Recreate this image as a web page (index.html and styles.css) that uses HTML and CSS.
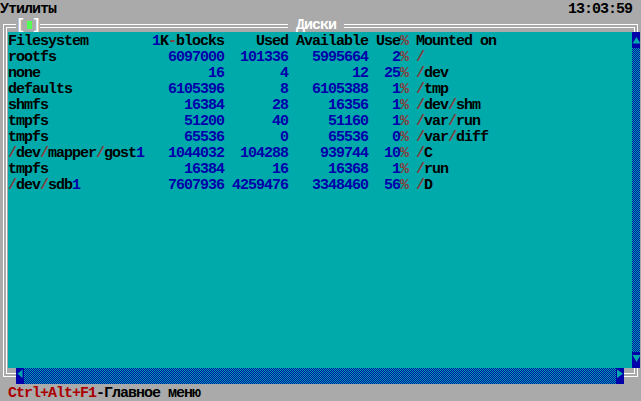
FILE: index.html
```html
<!DOCTYPE html>
<html lang="ru">
<head>
<meta charset="utf-8">
<title>Диски</title>
<link rel="stylesheet" href="styles.css">
</head>
<body>
<div class="topbar"><span>Утилиты</span><span>13:03:59</span></div>
<div class="window">
  <div class="titlebar">
    <span class="bracket">[</span><span class="close"></span><span class="bracket">]</span>
    <span class="title">Диски</span>
  </div>
  <div class="main">
    <div class="content">
      <div class="row"><span>Filesystem</span><span class="r"><span class="n">1</span>K<span class="p">-</span>blocks</span><span class="r">Used</span><span class="r">Available</span><span class="r">Use<span class="p">%</span></span><span>Mounted on</span></div>
      <div class="row"><span>rootfs</span><span class="r n">6097000</span><span class="r n">101336</span><span class="r n">5995664</span><span class="r"><span class="n">2</span><span class="p">%</span></span><span><span class="p">/</span></span></div>
      <div class="row"><span>none</span><span class="r n">16</span><span class="r n">4</span><span class="r n">12</span><span class="r"><span class="n">25</span><span class="p">%</span></span><span><span class="p">/</span>dev</span></div>
      <div class="row"><span>defaults</span><span class="r n">6105396</span><span class="r n">8</span><span class="r n">6105388</span><span class="r"><span class="n">1</span><span class="p">%</span></span><span><span class="p">/</span>tmp</span></div>
      <div class="row"><span>shmfs</span><span class="r n">16384</span><span class="r n">28</span><span class="r n">16356</span><span class="r"><span class="n">1</span><span class="p">%</span></span><span><span class="p">/</span>dev<span class="p">/</span>shm</span></div>
      <div class="row"><span>tmpfs</span><span class="r n">51200</span><span class="r n">40</span><span class="r n">51160</span><span class="r"><span class="n">1</span><span class="p">%</span></span><span><span class="p">/</span>var<span class="p">/</span>run</span></div>
      <div class="row"><span>tmpfs</span><span class="r n">65536</span><span class="r n">0</span><span class="r n">65536</span><span class="r"><span class="n">0</span><span class="p">%</span></span><span><span class="p">/</span>var<span class="p">/</span>diff</span></div>
      <div class="row"><span><span class="p">/</span>dev<span class="p">/</span>mapper<span class="p">/</span>gost<span class="n">1</span></span><span class="r n">1044032</span><span class="r n">104288</span><span class="r n">939744</span><span class="r"><span class="n">10</span><span class="p">%</span></span><span><span class="p">/</span>C</span></div>
      <div class="row"><span>tmpfs</span><span class="r n">16384</span><span class="r n">16</span><span class="r n">16368</span><span class="r"><span class="n">1</span><span class="p">%</span></span><span><span class="p">/</span>run</span></div>
      <div class="row"><span><span class="p">/</span>dev<span class="p">/</span>sdb<span class="n">1</span></span><span class="r n">7607936</span><span class="r n">4259476</span><span class="r n">3348460</span><span class="r"><span class="n">56</span><span class="p">%</span></span><span><span class="p">/</span>D</span></div>
    </div>
    <div class="vscroll">
      <div class="arrow"><svg width="8" height="16" viewBox="0 0 8 16"><polygon points="0.5,11.5 4.5,5 8.5,11.5" fill="#00aaaa"/></svg></div>
      <div class="track"></div>
      <div class="arrow"><svg width="8" height="16" viewBox="0 0 8 16"><polygon points="0.5,3 8.5,3 4.5,10" fill="#00aaaa"/></svg></div>
    </div>
  </div>
  <div class="hscroll">
    <div class="arrow"><svg width="8" height="16" viewBox="0 0 8 16"><polygon points="6.5,1.5 6.5,10 1.5,5.75" fill="#00aaaa"/></svg></div>
    <div class="track"></div>
    <div class="arrow"><svg width="8" height="16" viewBox="0 0 8 16"><polygon points="1,1.5 1,10 7,5.75" fill="#00aaaa"/></svg></div>
  </div>
</div>
<div class="footer"><span class="hot">Ctrl+Alt+F1</span>-Главное меню</div>
</body>
</html>
```
FILE: styles.css
```css
* { box-sizing: border-box; }
html, body { margin: 0; padding: 0; }
body {
  width: 641px;
  height: 401px;
  overflow: hidden;
  background: #aaaaaa;
  color: #000;
  font-family: "Liberation Mono", "DejaVu Sans Mono", monospace;
  font-weight: bold;
  font-size: 15px;
  letter-spacing: -1px;
  line-height: 20px;
}
.topbar {
  display: flex;
  justify-content: space-between;
  height: 16px;
  padding-right: 9px;
}
.window {
  width: 635px;
  height: 353px;
  margin: 8px 0 0 3px;
  border: 4px double #ffffff;
  display: flex;
  flex-direction: column;
}
.window > * { flex-shrink: 0; }
.titlebar {
  display: flex;
  height: 16px;
  margin: -12px 0 0 9px;
}
.bracket {
  width: 8px;
  height: 16px;
  background: #aaaaaa;
  color: #ffffff;
}
.close {
  width: 8px;
  height: 16px;
  background: linear-gradient(#55ff55, #55ff55) 3px 5px / 5px 8px no-repeat, #aaaaaa;
}
.title {
  height: 16px;
  margin-left: 248px;
  padding: 0 8px;
  background: #aaaaaa;
  color: #ffffff;
}
.main {
  display: flex;
  width: 632px;
  height: 336px;
  margin-left: 1px;
}
.content {
  flex: 1;
  background: #00aaaa;
}
.row {
  display: grid;
  grid-template-columns: 136px 72px 56px 72px 32px auto;
  column-gap: 8px;
  height: 16px;
  white-space: pre;
}
.r { text-align: right; }
.n { color: #0000aa; }
.p { color: #8c3838; }
.vscroll {
  width: 8px;
  display: flex;
  flex-direction: column;
}
.arrow {
  width: 8px;
  height: 16px;
  flex-shrink: 0;
  background: #0000aa;
}
.arrow svg { display: block; }
.track {
  flex: 1;
  background: conic-gradient(#0000aa 25%, #00aaaa 0 50%, #0000aa 0 75%, #00aaaa 0) 0 0 / 2px 2px;
}
.hscroll {
  display: flex;
  width: 608px;
  height: 16px;
  margin-left: 9px;
}
.footer {
  margin-top: 7px;
  padding-left: 8px;
  height: 16px;
}
.hot { color: #aa0000; }
```
